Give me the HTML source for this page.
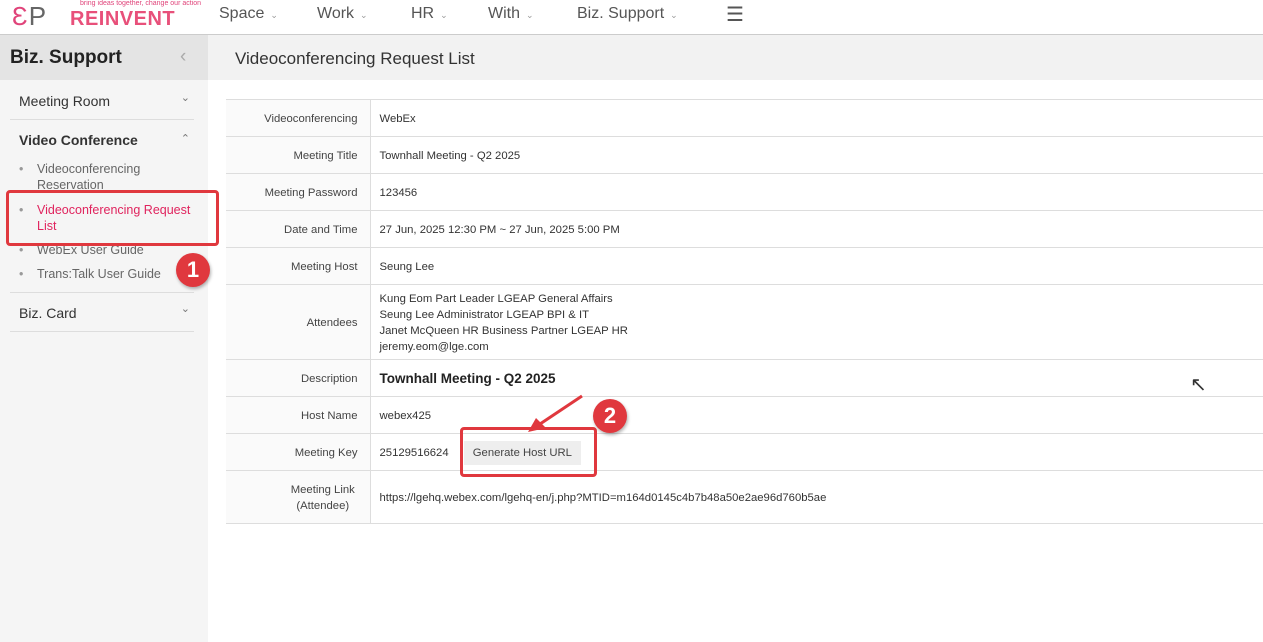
<!DOCTYPE html><html><head><style>
body{margin:0;width:1263px;height:642px;font-family:"Liberation Sans",sans-serif;background:#fff;position:relative;overflow:hidden;color:#333}
.a{position:absolute}
.top{left:0;top:0;width:1263px;height:34px;border-bottom:1px solid #ccc;background:#fff}
.nav{top:5px;font-size:16px;color:#555}
.nav small{font-size:9px;color:#999;margin-left:6px}
.side{left:0;top:35px;width:208px;height:607px;background:#f5f5f5}
.sh{left:0;top:35px;width:208px;height:45px;background:#e4e4e4;font-size:19px;font-weight:bold;color:#222}
.mi{left:10px;width:184px;border-bottom:1px solid #ddd;font-size:14px;color:#333}
.sub{left:23px;font-size:12.5px;color:#666}
.sub:before{content:"•";position:absolute;left:-4px;color:#999}
.sub span{padding-left:14px;display:block}
.ch{left:208px;top:35px;width:1055px;height:45px;background:#f2f2f2;font-size:17px;color:#333}
table{position:absolute;left:226px;top:99px;width:1037px;border-collapse:collapse;table-layout:fixed;font-size:11.3px;color:#333}
td{border-top:1px solid #ddd;border-bottom:1px solid #ddd;padding:1px 9px 0;overflow:hidden}
td.l{text-align:right;background:#fafafa;border-right:1px solid #ddd;color:#444;padding:1px 12px 0 0}
.red{border:3px solid #e0383e;border-radius:4px}
.badge{width:34px;height:34px;border-radius:50%;background:#e0383e;color:#fff;font-weight:bold;font-size:22px;text-align:center;line-height:34px;box-shadow:1px 2px 3px rgba(0,0,0,.3)}
</style></head><body>
<div class="a top"></div>
<div class="a" style="left:12px;top:1px;font-size:26px;color:#e0447a;letter-spacing:1px">Ɛ<span style="color:#666">P</span></div>
<div class="a" style="left:80px;top:0;font-size:7px;color:#e0447a">bring ideas together, change our action</div>
<div class="a" style="left:70px;top:8px;font-size:20px;font-weight:900;color:#e8507a;letter-spacing:0.5px">REINVENT</div>
<div class="a nav" style="left:219px">Space<small>⌄</small></div>
<div class="a nav" style="left:317px">Work<small>⌄</small></div>
<div class="a nav" style="left:411px">HR<small>⌄</small></div>
<div class="a nav" style="left:488px">With<small>⌄</small></div>
<div class="a nav" style="left:577px">Biz. Support<small>⌄</small></div>
<div class="a nav" style="left:726px;font-size:20px;top:2px">☰</div>
<div class="a side"></div>
<div class="a sh"><span style="position:absolute;left:10px;top:12px">Biz. Support</span><span style="position:absolute;left:180px;top:11px;font-weight:normal;color:#aaa">‹</span></div>
<div class="a mi" style="top:82px;height:37px"><span style="position:absolute;left:9px;top:11px">Meeting Room</span><span style="position:absolute;right:4px;top:9px;color:#777;font-size:11px">⌄</span></div>
<div class="a mi" style="top:120px;height:172px"><span style="position:absolute;left:9px;top:12px;font-weight:bold">Video Conference</span><span style="position:absolute;right:4px;top:12px;color:#777;font-size:11px">⌃</span></div>
<div class="a sub" style="top:161px;line-height:16px"><span>Videoconferencing<br>Reservation</span></div>
<div class="a sub" style="top:202px;line-height:16px;color:#e0245e"><span>Videoconferencing Request<br>List</span></div>
<div class="a sub" style="top:243px"><span>WebEx User Guide</span></div>
<div class="a sub" style="top:267px"><span>Trans:Talk User Guide</span></div>
<div class="a mi" style="top:293px;height:38px"><span style="position:absolute;left:9px;top:12px">Biz. Card</span><span style="position:absolute;right:4px;top:9px;color:#777;font-size:11px">⌄</span></div>
<div class="a red" style="left:6px;top:190px;width:207px;height:50px"></div>
<div class="a badge" style="left:176px;top:253px">1</div>
<div class="a ch"><span style="position:absolute;left:27px;top:14px">Videoconferencing Request List</span></div>
<table>
<colgroup><col style="width:144px"><col></colgroup>
<tr style="height:37px"><td class="l">Videoconferencing</td><td>WebEx</td></tr>
<tr style="height:37px"><td class="l">Meeting Title</td><td>Townhall Meeting - Q2 2025</td></tr>
<tr style="height:37px"><td class="l">Meeting Password</td><td>123456</td></tr>
<tr style="height:37px"><td class="l">Date and Time</td><td>27 Jun, 2025 12:30 PM ~ 27 Jun, 2025 5:00 PM</td></tr>
<tr style="height:37px"><td class="l">Meeting Host</td><td>Seung Lee</td></tr>
<tr style="height:75px"><td class="l">Attendees</td><td style="line-height:16px">Kung Eom Part Leader LGEAP General Affairs<br>Seung Lee Administrator LGEAP BPI &amp; IT<br>Janet McQueen HR Business Partner LGEAP HR<br>jeremy.eom@lge.com</td></tr>
<tr style="height:37px"><td class="l">Description</td><td style="font-size:13.5px;font-weight:bold;color:#222">Townhall Meeting - Q2 2025</td></tr>
<tr style="height:37px"><td class="l">Host Name</td><td>webex425</td></tr>
<tr style="height:37px"><td class="l">Meeting Key</td><td>25129516624 <span style="display:inline-block;margin-left:12px;background:#eee;padding:6px 9px;color:#444">Generate Host URL</span></td></tr>
<tr style="height:53px"><td class="l" style="text-align:center;padding-left:58px;padding-right:8px;line-height:16px">Meeting Link<br>(Attendee)</td><td>https://lgehq.webex.com/lgehq-en/j.php?MTID=m164d0145c4b7b48a50e2ae96d760b5ae</td></tr>
</table>
<div class="a red" style="left:460px;top:427px;width:131px;height:44px"></div>
<svg class="a" style="left:520px;top:390px" width="70" height="50"><line x1="62" y1="6" x2="14" y2="38" stroke="#e0383e" stroke-width="3"/><polygon points="8,42 26,38 16,28" fill="#e0383e"/></svg>
<div class="a badge" style="left:593px;top:399px">2</div>
<div class="a" style="left:1190px;top:372px;font-size:20px">↖</div>
</body></html>
